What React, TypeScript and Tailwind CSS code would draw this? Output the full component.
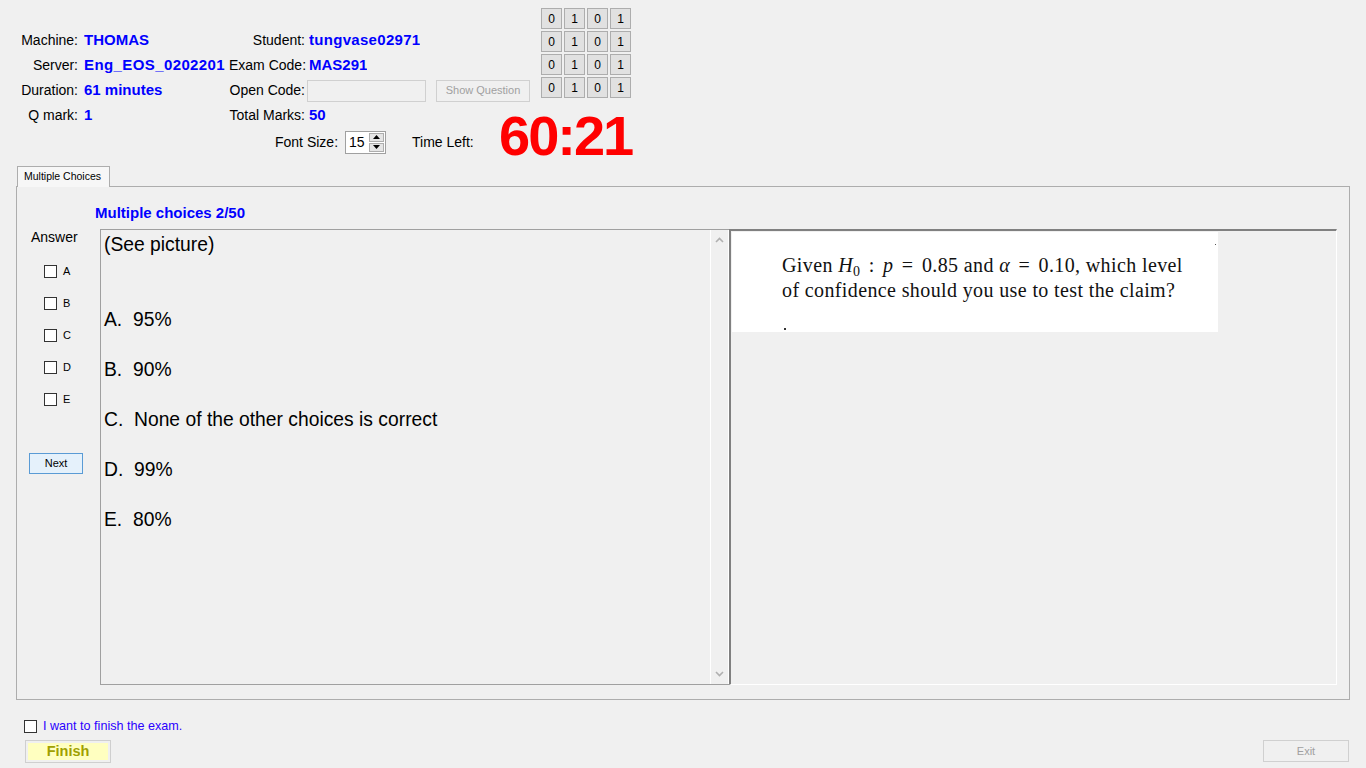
import React from 'react'

const grid = [
  ['0', '1', '0', '1'],
  ['0', '1', '0', '1'],
  ['0', '1', '0', '1'],
  ['0', '1', '0', '1'],
]

const lines = [
  '(See picture)',
  '',
  '',
  'A.  95%',
  '',
  'B.  90%',
  '',
  'C.  None of the other choices is correct',
  '',
  'D.  99%',
  '',
  'E.  80%',
]

function Box() {
  return <span className="block w-[13px] h-[13px] border border-[#333333] bg-white shrink-0" />
}

function Label({ text, w }: { text: string; w: string }) {
  return <span className={`${w} text-right whitespace-nowrap text-[14px] text-black shrink-0`}>{text}</span>
}

function Value({ text, w }: { text: string; w?: string }) {
  return (
    <span className={`${w ?? ''} whitespace-nowrap overflow-hidden text-[15px] font-bold text-[#0000ff] shrink-0`}>
      {text}
    </span>
  )
}

export default function App() {
  return (
    <div className="w-full h-[768px] overflow-hidden bg-[#f0f0f0] font-['Liberation_Sans',Arial,sans-serif] text-black">
      {/* Header top block */}
      <div className="flex h-[103px]">
        <div className="w-[541px] pt-[28px]">
          <div className="flex items-center h-[25px]">
            <Label text="Machine:" w="w-[78px]" />
            <Value text="THOMAS" w="ml-[6px] w-[145px]" />
            <Label text="Student:" w="w-[76px]" />
            <Value text="tungvase02971" w="ml-[4px] tracking-[0.3px]" />
          </div>
          <div className="flex items-center h-[25px]">
            <Label text="Server:" w="w-[78px]" />
            <Value text="Eng_EOS_0202201" w="ml-[6px] w-[145px] tracking-[0.4px]" />
            <Label text="Exam Code:" w="w-[76px]" />
            <Value text="MAS291" w="ml-[4px]" />
          </div>
          <div className="flex items-center h-[25px]">
            <Label text="Duration:" w="w-[78px]" />
            <Value text="61 minutes" w="ml-[6px] w-[145px]" />
            <Label text="Open Code:" w="w-[76px]" />
            <div className="ml-[2px] w-[119px] h-[22px] border border-[#d0d0d0] bg-[#f0f0f0]" />
            <button className="ml-[10px] w-[94px] h-[22px] border border-[#d0d0d0] bg-[#f0f0f0] text-[11px] text-[#a0a0a0] leading-none">
              Show Question
            </button>
          </div>
        </div>
        <div className="pt-[8px]">
          <div className="grid grid-cols-4 gap-[2px]">
            {grid.flat().map((v, i) => (
              <div
                key={i}
                className="w-[21px] h-[21px] border border-[#adadad] bg-[#e1e1e1] flex items-center justify-center text-[12px] text-black"
              >
                {v}
              </div>
            ))}
          </div>
        </div>
      </div>

      {/* Header second block */}
      <div className="flex h-[63px]">
        <div className="w-[499px]">
          <div className="flex items-center h-[25px]">
            <Label text="Q mark:" w="w-[78px]" />
            <Value text="1" w="ml-[6px] w-[145px]" />
            <Label text="Total Marks:" w="w-[76px]" />
            <Value text="50" w="ml-[4px]" />
          </div>
          <div className="flex items-center h-[28px] pl-[275px]">
            <span className="text-[14px]">Font Size:</span>
            <div className="ml-[7px] w-[41px] h-[23px] border border-[#a0a0a0] bg-white flex items-center">
              <span className="pl-[3px] text-[14px] flex-1">15</span>
              <div className="flex flex-col gap-[1px] pr-[1px]">
                <div className="w-[15px] h-[9px] border border-[#adadad] bg-[#e5e5e5] flex items-center justify-center">
                  <svg width="7" height="4" viewBox="0 0 7 4"><path d="M0 4 L3.5 0 L7 4 Z" fill="#000" /></svg>
                </div>
                <div className="w-[15px] h-[9px] border border-[#adadad] bg-[#e5e5e5] flex items-center justify-center">
                  <svg width="7" height="4" viewBox="0 0 7 4"><path d="M0 0 L3.5 4 L7 0 Z" fill="#000" /></svg>
                </div>
              </div>
            </div>
            <span className="ml-[26px] text-[14px]">Time Left:</span>
          </div>
        </div>
        <div className="mt-[5px] text-[56px] leading-[56px] font-bold text-[#ff0000] tracking-[-2px]">60:21</div>
      </div>

      {/* Tab */}
      <div className="ml-[16px] w-[1334px]">
        <div className="relative z-10 -mb-px ml-px w-[93px] h-[21px] border border-b-0 border-[#adadad] bg-[#f7f7f7] flex items-center pl-[6px] text-[10.5px]">
          Multiple Choices
        </div>
        <div className="h-[514px] border border-[#adadad] bg-[#f0f0f0]">
          <div className="h-[42px] pt-[18px] pl-[78px] text-[15px] leading-[16px] font-bold text-[#0000ff]">
            Multiple choices 2/50
          </div>
          <div className="flex">
            {/* Answer column */}
            <div className="w-[83px] shrink-0">
              <div className="pl-[14px] text-[14px] leading-[16px]">Answer</div>
              <div className="mt-[10px]">
                {['A', 'B', 'C', 'D', 'E'].map((l) => (
                  <div key={l} className="flex items-center h-[32px] pl-[27px] gap-[6px]">
                    <Box />
                    <span className="text-[11px]">{l}</span>
                  </div>
                ))}
              </div>
              <button className="mt-[38px] ml-[12px] w-[54px] h-[21px] border border-[#5a9bd5] bg-[#e5f1fb] text-[11px] leading-none">
                Next
              </button>
            </div>

            {/* Question text box */}
            <div className="w-[629px] h-[456px] border border-[#a0a0a0] border-r-0 flex shrink-0">
              <div className="flex-1 pt-[2px] pl-[3px] text-[19.3px] leading-[25px]">
                {lines.map((t, i) => (
                  <div key={i} className="h-[25px] whitespace-pre">
                    {t}
                  </div>
                ))}
              </div>
              <div className="w-[19px] border-l border-r border-white flex flex-col justify-between items-center py-[7px]">
                <svg width="9" height="6" viewBox="0 0 9 6"><path d="M1 5 L4.5 1.5 L8 5" stroke="#b0b0b0" strokeWidth="1.6" fill="none" /></svg>
                <svg width="9" height="6" viewBox="0 0 9 6"><path d="M1 1 L4.5 4.5 L8 1" stroke="#b0b0b0" strokeWidth="1.6" fill="none" /></svg>
              </div>
            </div>

            {/* Picture panel */}
            <div className="w-[608px] h-[456px] border-t-2 border-l-2 border-t-[#808080] border-l-[#808080] border-b border-r border-b-white border-r-white bg-[#f0f0f0] shrink-0">
              <div className="relative ml-px mt-px w-[486px] h-[100px] bg-white pt-[21px] pl-[50px] font-['Liberation_Serif','DejaVu_Serif',serif] text-[20px] leading-[25px] tracking-[0.38px] text-[#111111]">
                <div className="whitespace-pre">
                  Given <i>H</i><sub className="text-[14px] not-italic">0</sub><span className="mx-[3px]"> : </span><i>p</i><span className="mx-[3px]"> = </span>0.85 and <i>α</i><span className="mx-[3px]"> = </span>0.10, which level
                </div>
                <div className="whitespace-pre">of confidence should you use to test the claim?</div>
                <span className="absolute left-[52px] bottom-[2px] w-[2px] h-[2px] bg-[#333333]" />
                <span className="absolute right-[2px] top-[12px] w-px h-px bg-[#555555]" />
              </div>
            </div>
          </div>
        </div>
      </div>

      {/* Footer */}
      <div className="mt-[16px] flex items-center h-[20px] pl-[24px] gap-[6px]">
        <Box />
        <span className="text-[12.6px] text-[#2b00ff]">I want to finish the exam.</span>
      </div>
      <div className="mt-[4px] flex justify-between pl-[25px] pr-[17px]">
        <button className="w-[86px] h-[23px] border border-[#cfcfcf] p-[2px] bg-[#f0f0f0]">
          <span className="flex items-center justify-center w-full h-full bg-[#ffffc0] text-[14.5px] font-bold text-[#a0a000]">
            Finish
          </span>
        </button>
        <button className="w-[86px] h-[22px] border border-[#d0d0d0] bg-[#f0f0f0] text-[11px] text-[#a0a0a0]">
          Exit
        </button>
      </div>
    </div>
  )
}
